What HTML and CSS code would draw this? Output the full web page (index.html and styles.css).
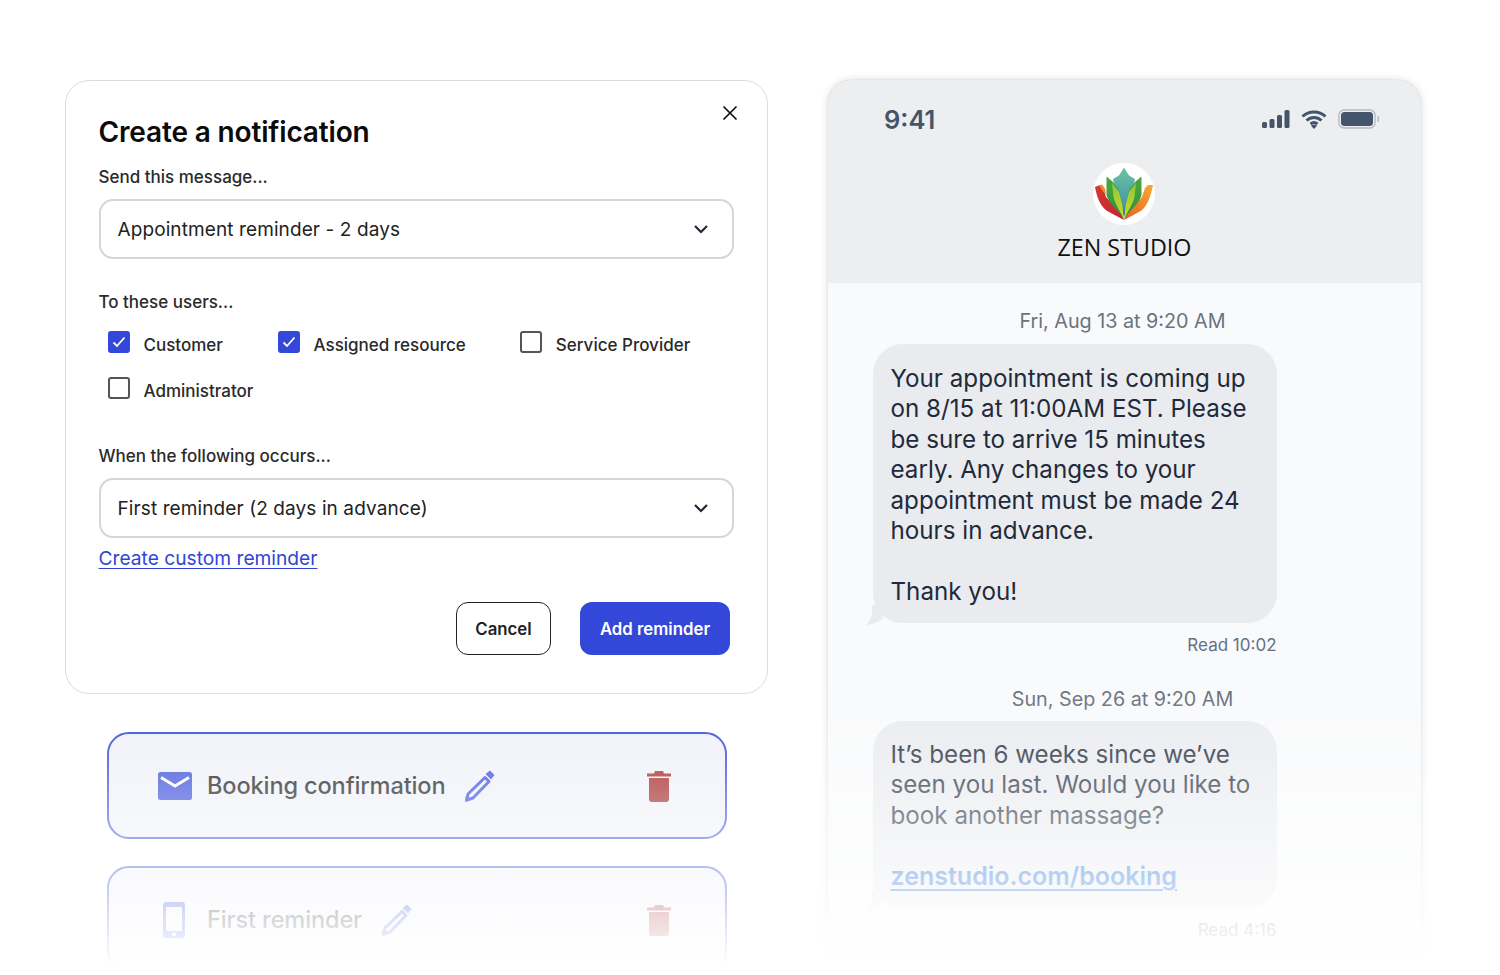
FILE: index.html
```html
<!DOCTYPE html>
<html lang="en">
<head>
<meta charset="utf-8">
<title>Create a notification</title>
<link rel="stylesheet" href="styles.css">
</head>
<body>
<main class="page">
  <section class="left">
    <div class="dialog">
      <button class="close" aria-label="Close"><svg width="16" height="16" viewBox="0 0 16 16"><path d="M1.500 1.500l13 13M14.500 1.500l-13 13" stroke="#111" stroke-width="1.700" fill="none"/></svg></button>
      <h1 class="title">Create a notification</h1>
      <div class="label label-first">Send this message...</div>
      <div class="select"><span>Appointment reminder - 2 days</span><svg class="chev" width="16" height="10" viewBox="0 0 16 10"><path d="M2 2l6 6 6-6" stroke="#1f2937" stroke-width="2.200" fill="none"/></svg></div>
      <div class="label label-users">To these users...</div>
      <div class="checks">
        <div class="check check-a"><span class="box on"><svg width="16" height="16" viewBox="0 0 16 16"><path d="M2.500 8.500l3.500 3.500L13.500 3.500" stroke="#fff" stroke-width="1.800" fill="none"/></svg></span>Customer</div>
        <div class="check check-b"><span class="box on"><svg width="16" height="16" viewBox="0 0 16 16"><path d="M2.500 8.500l3.500 3.500L13.500 3.500" stroke="#fff" stroke-width="1.800" fill="none"/></svg></span>Assigned resource</div>
        <div class="check check-c"><span class="box"></span>Service Provider</div>
        <div class="check check-a"><span class="box"></span>Administrator</div>
      </div>
      <div class="label label-when">When the following occurs...</div>
      <div class="select"><span>First reminder (2 days in advance)</span><svg class="chev" width="16" height="10" viewBox="0 0 16 10"><path d="M2 2l6 6 6-6" stroke="#1f2937" stroke-width="2.200" fill="none"/></svg></div>
      <a class="custom" href="#">Create custom reminder</a>
      <div class="actions">
        <button class="btn cancel">Cancel</button>
        <button class="btn add">Add reminder</button>
      </div>
    </div>
    <div class="item item-first">
      <svg class="ic-mail" width="34" height="28" viewBox="0 0 34 28"><rect width="34" height="28" rx="2.500" fill="#3347d9"/><path d="M3 5.500L17 14 31 5.500" stroke="#fff" stroke-width="3" fill="none"/></svg>
      <span class="item-name">Booking confirmation</span>
      <svg class="ic-pen" width="31" height="32" viewBox="0 0 31 32"><path d="M21 7.500L25 11.500 9 28 3 30 4 24Z" stroke="#3347d9" stroke-width="3" stroke-linejoin="round" fill="none"/><path d="M1.500 26l4 4.500-4.500 1.500z" fill="#3347d9"/><path d="M26 .5l4.500 4.500-3.500 4.500-5.500-5.500z" fill="#3347d9"/></svg>
      <svg class="ic-trash" width="24" height="32" viewBox="0 0 24 32"><path d="M8 1h8l1 2.500h7v3H0v-3h7z" fill="#a01c1c"/><path d="M2 8h20v21a3 3 0 0 1-3 3H5a3 3 0 0 1-3-3z" fill="#a01c1c"/></svg>
    </div>
    <div class="item item-second">
      <svg class="ic-phone" width="24" height="38" viewBox="0 0 24 38"><path fill-rule="evenodd" d="M4 1h16a3 3 0 0 1 3 3v30a3 3 0 0 1-3 3H4a3 3 0 0 1-3-3V4a3 3 0 0 1 3-3zM4 6v24h16V6z" fill="#3347d9"/><circle cx="12" cy="33.500" r="2" fill="#fff"/></svg>
      <span class="item-name">First reminder</span>
      <svg class="ic-pen" width="31" height="32" viewBox="0 0 31 32"><path d="M21 7.500L25 11.500 9 28 3 30 4 24Z" stroke="#3347d9" stroke-width="3" stroke-linejoin="round" fill="none"/><path d="M1.500 26l4 4.500-4.500 1.500z" fill="#3347d9"/><path d="M26 .5l4.500 4.500-3.500 4.500-5.500-5.500z" fill="#3347d9"/></svg>
      <svg class="ic-trash" width="24" height="32" viewBox="0 0 24 32"><path d="M8 1h8l1 2.500h7v3H0v-3h7z" fill="#a01c1c"/><path d="M2 8h20v21a3 3 0 0 1-3 3H5a3 3 0 0 1-3-3z" fill="#a01c1c"/></svg>
    </div>
  </section>
  <section class="phone">
    <header class="phone-head">
      <div class="status">
        <span class="time">9:41</span>
        <div class="status-icons">
          <svg width="28" height="18" viewBox="0 0 28 18"><rect x="0" y="12" width="5" height="6" rx="1.500" fill="#44546a"/><rect x="7.500" y="9" width="5" height="9" rx="1.500" fill="#44546a"/><rect x="15" y="5" width="5" height="13" rx="1.500" fill="#44546a"/><rect x="22.500" y="0" width="5" height="18" rx="1.500" fill="#44546a"/></svg>
          <svg width="26" height="19" viewBox="0 0 26 19"><path d="M1.500 6.500C8 .5 18 .5 24.500 6.500M5.500 10.500c4.500-4 10.500-4 15 0M9.500 14c2-1.600 5-1.600 7 0" stroke="#44546a" stroke-width="3" fill="none"/><path d="M13 19l-3-3.300c1.800-1.200 4.200-1.200 6 0z" fill="#44546a"/></svg>
          <svg width="42" height="20" viewBox="0 0 42 20"><rect x="1" y="1" width="36" height="18" rx="5" fill="none" stroke="#b4bac4" stroke-width="1.400"/><rect x="3" y="3" width="32" height="14" rx="3.500" fill="#44546a"/><rect x="39.500" y="7" width="1.500" height="6" rx=".7" fill="#b4bac4"/></svg>
        </div>
      </div>
      <div class="logo">
        <svg width="62" height="62" viewBox="0 0 62 62">
          <defs>
            <linearGradient id="gTeal" x1="0" y1="0" x2="0" y2="1"><stop offset="0" stop-color="#6cc3a0"/><stop offset=".7" stop-color="#4a9ba8"/><stop offset="1" stop-color="#3a6f9a"/></linearGradient>
            <linearGradient id="gGreen" x1="0" y1="0" x2="0" y2="1"><stop offset="0" stop-color="#4ea83e"/><stop offset="1" stop-color="#2f8f3c"/></linearGradient>
            <linearGradient id="gLime" x1="0" y1="0" x2="0" y2="1"><stop offset="0" stop-color="#8cc63f"/><stop offset="1" stop-color="#d2d92a"/></linearGradient>
            <linearGradient id="gRed" x1="0" y1="0" x2="1" y2="1"><stop offset="0" stop-color="#d13a2c"/><stop offset="1" stop-color="#c9203a"/></linearGradient>
            <linearGradient id="gOrange" x1="1" y1="0" x2="0" y2="1"><stop offset="0" stop-color="#f7a92e"/><stop offset="1" stop-color="#e6602a"/></linearGradient>
          </defs>
          <circle cx="31" cy="31" r="31" fill="#fff"/>
          <path d="M2 24l5-2 3 3 3 9 15 16 3 7-15-8C8 45 4 35 2 24z" fill="url(#gRed)"/>
          <path d="M6 22.500l3-1 3 4 1 6-3-3z" fill="#f08a2c"/>
          <path d="M60 22l-5 0-3 3-3 9-15 16-3 7 15-8c8-4 12-16 14-27z" fill="url(#gOrange)"/>
          <path d="M31 4.500l5 8 6 3.500-3 14-8 24-8-24-3-14 6-3.500z" fill="url(#gTeal)"/>
          <path d="M13.500 13.500l6 5 6 8 4 14 1 16c-4-9-13-13-17-24z" fill="url(#gGreen)"/>
          <path d="M48.500 13.500l-6 5-6 8-4 14-1 16c4-9 13-13 17-24z" fill="url(#gGreen)"/>
          <path d="M19 20l7 9 3.500 13 1 14c-3-8-8-14-10-22z" fill="url(#gLime)"/>
          <path d="M43 20l-7 9-3.500 13-1 14c3-8 8-14 10-22z" fill="url(#gLime)"/>
        </svg>
      </div>
      <div class="brand">ZEN STUDIO</div>
    </header>
    <div class="thread">
      <div class="stamp">Fri, Aug 13 at 9:20 AM</div>
      <div class="bubble">Your appointment is coming up<br>on 8/15 at 11:00AM EST. Please<br>be sure to arrive 15 minutes<br>early. Any changes to your<br>appointment must be made 24<br>hours in advance.<span class="gap">Thank you!</span><svg class="tail" width="24" height="20" viewBox="0 0 24 20"><path d="M7 0V7C7 13 4 18 0 20 7 20 13 17 18 13V0z" fill="#e9ebef"/></svg></div>
      <div class="read">Read 10:02</div>
      <div class="stamp stamp-two">Sun, Sep 26 at 9:20 AM</div>
      <div class="bubble bubble-two">It’s been 6 weeks since we’ve<br>seen you last. Would you like to<br>book another massage?<a class="gap booking" href="#">zenstudio.com/booking</a><svg class="tail" width="24" height="20" viewBox="0 0 24 20"><path d="M7 0V7C7 13 4 18 0 20 7 20 13 17 18 13V0z" fill="#e9ebef"/></svg></div>
      <div class="read">Read 4:16</div>
    </div>
  </section>
</main>
<div class="fade"></div>
</body>
</html>
```
FILE: styles.css
```css
* { box-sizing: border-box; }
html, body { margin: 0; height: 975px; overflow: hidden; background: #fff; }
body { font-family: Inter, "Liberation Sans", sans-serif; color: #111; position: relative; }
.page { display: flex; gap: 60px; padding: 80px 0 0 65px; height: 975px; overflow: hidden; }

.left { width: 703px; flex: none; display: flex; flex-direction: column; }
.dialog { position: relative; height: 614px; border: 1.5px solid #dcdcdc; border-radius: 24px; padding: 33px 33px 0 32.5px; background: #fff; }
.close { position: absolute; top: 24px; right: 29px; padding: 0; border: 0; background: none; line-height: 0; }
.title { margin: 0; font-size: 28px; line-height: 36px; font-weight: 600; letter-spacing: -0.15px; color: #0b0b0b; }
.label { font-size: 17px; line-height: 20px; font-weight: 500; color: #2a2a2a; }
.label-first { margin-top: 17px; }
.label-users { margin-top: 33px; }
.label-when { margin-top: 44px; }
.select { margin-top: 12px; height: 60px; border: 2px solid #d4d6da; border-radius: 14px; padding: 0 23px 0 17px; display: flex; align-items: center; justify-content: space-between; font-size: 19px; color: #222; letter-spacing: 0.1px; }
.chev { flex: none; }
.checks { margin-top: 22px; padding-left: 9px; display: flex; flex-wrap: wrap; row-gap: 24px; }
.check { display: flex; align-items: center; height: 22px; font-size: 17px; font-weight: 500; color: #2a2a2a; gap: 14px; white-space: nowrap; }
.check-a { width: 116px; margin-right: 54px; }
.check-b { margin-right: 54px; }
.check-c { margin-right: 0; }
.box { width: 22px; height: 22px; flex: none; margin-top: -6px; border: 2.5px solid #555; border-radius: 3px; display: flex; align-items: center; justify-content: center; }
.box.on { background: #3347d9; border-color: #3347d9; }
.custom { display: inline-block; margin-top: 7px; font-size: 19.2px; line-height: 26px; color: #2f45d6; text-decoration: underline; text-underline-offset: 3px; text-decoration-thickness: 1px; }
.actions { margin-top: 31px; padding-right: 4px; display: flex; justify-content: flex-end; gap: 29px; }
.btn { height: 53px; border-radius: 12px; font: 600 16.8px Inter, "Liberation Sans", sans-serif; padding: 0; }
.cancel { width: 95px; background: #fff; border: 1.5px solid #222; color: #222; }
.add { width: 150px; background: #3347d9; border: 0; color: #fff; }

.item { margin: 0 41.5px; height: 107px; border: 2px solid #3347d9; border-radius: 22px; background: #eff1f9; display: flex; align-items: center; padding-left: 49.5px; padding-right: 54px; flex: none; }
.item-first { margin-top: 38px; }
.item-second { margin-top: 27px; }
.item-name { margin-left: 15px; font-size: 23.6px; font-weight: 500; letter-spacing: -0.15px; color: #111; }
.ic-mail { flex: none; }
.ic-pen { margin-left: 19px; flex: none; }
.ic-trash { margin-left: auto; flex: none; }
.ic-phone { flex: none; margin-left: 4px; margin-right: 4px; }
.item-second .item-name { margin-left: 17px; }

.phone { width: 593px; flex: none; height: 960px; border-radius: 24px 24px 0 0; background: #f9fafb; box-shadow: 0 0 8px rgba(0,0,0,.14), 0 0 1px rgba(0,0,0,.3); overflow: hidden; }
.phone-head { height: 203px; background: #edeef0; display: flex; flex-direction: column; align-items: center; }
.status { width: 100%; padding: 22px 41px 0 56px; display: flex; justify-content: space-between; align-items: center; }
.time { font-size: 25.5px; line-height: 36px; font-weight: 600; color: #44546a; }
.status-icons { display: flex; align-items: center; gap: 11px; margin-bottom: 2px; }
.logo { margin-top: 25px; margin-right: 2px; height: 62px; line-height: 0; }
.brand { margin-top: 7px; font-family: "Open Sans", sans-serif; font-size: 23.3px; line-height: 30px; color: #111; }
.thread { padding: 25px 144.5px 0 44.5px; display: flex; flex-direction: column; }
.stamp { width: 404px; text-align: center; padding-left: 96px; font-size: 19.75px; line-height: 26px; color: #6b7280; white-space: nowrap; }
.stamp-two { margin-top: 29px; }
.bubble { position: relative; margin-top: 10px; background: #e9ebef; border-radius: 30px; padding: 20px 18px 15px; font-size: 24.2px; line-height: 30.4px; color: #1f2a3a; white-space: nowrap; }
.bubble-two { margin-top: 9px; padding: 19px 18px 17px; }
.gap { display: block; margin-top: 31px; }
.booking { margin-top: 30px; font-size: 25px; font-weight: 600; color: #1d6fe0; text-decoration: underline; text-underline-offset: 4px; text-decoration-thickness: 2px; }
.tail { position: absolute; left: -8px; bottom: -2px; }
.read { margin-top: 10px; text-align: right; font-size: 17px; line-height: 24px; color: #667085; }
.fade { position: absolute; left: 0; right: 0; top: 688px; height: 287px; background: linear-gradient(to bottom, rgba(255,255,255,0), #fff 97%); pointer-events: none; }
```
